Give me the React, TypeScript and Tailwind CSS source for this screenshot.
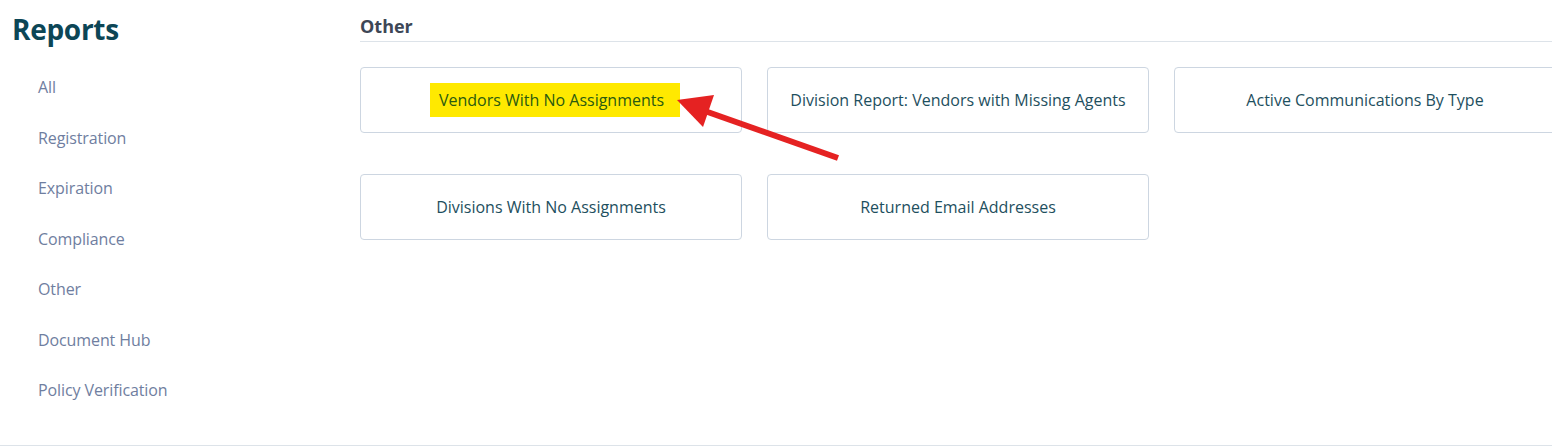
const NAV = ['All', 'Registration', 'Expiration', 'Compliance', 'Other', 'Document Hub', 'Policy Verification'];

const REPORTS = [
  ['Vendors With No Assignments', 'Division Report: Vendors with Missing Agents', 'Active Communications By Type'],
  ['Divisions With No Assignments', 'Returned Email Addresses'],
];

function ReportCard({ label, highlight }: { label: string; highlight?: boolean }) {
  return (
    <button
      type="button"
      className="flex h-[66px] w-[382px] shrink-0 items-center justify-center rounded-[4px] border border-[#cdd6e1] bg-white text-[16px] text-[#1e4f5e]"
    >
      {highlight ? (
        <span className="translate-x-[4px] bg-[#ffe900] pb-[5px] pl-[9px] pr-[16px] pt-[5px] text-[#2a5a10]">{label}</span>
      ) : (
        label
      )}
    </button>
  );
}

export default function App() {
  return (
    <div
      className="relative h-[447px] w-[1552px] overflow-hidden bg-white"
      style={{ fontFamily: '"Open Sans", "Noto Sans", sans-serif' }}
    >
      <div className="flex h-[446px] border-b border-[#dde3e9]">
        <aside className="w-[360px] shrink-0">
          <h1 className="pl-[12px] pt-[10px] text-[28px] font-bold leading-[38px] tracking-[-0.3px] text-[#0c4656]">
            Reports
          </h1>
          <nav className="mt-[27px] flex flex-col">
            {NAV.map((n) => (
              <a key={n} className="h-[50.5px] pl-[38px] text-[16px] leading-[24px] tracking-[-0.1px] text-[#6f7ea0]">
                {n}
              </a>
            ))}
          </nav>
        </aside>

        <main className="min-w-0 flex-1">
          <h2 className="mt-[14px] border-b border-[#dde3e9] pb-[3px] text-[18px] font-bold leading-[24px] text-[#3d4756]">
            Other
          </h2>
          <div className="mt-[25px] flex flex-col gap-[41px]">
            {REPORTS.map((row, i) => (
              <div key={i} className="flex gap-[25px]">
                {row.map((r) => (
                  <ReportCard key={r} label={r} highlight={r === 'Vendors With No Assignments'} />
                ))}
              </div>
            ))}
          </div>
        </main>
      </div>

      {/* annotation arrow */}
      <svg className="pointer-events-none absolute left-0 top-0" width="1552" height="447">
        <line x1="838" y1="158" x2="702" y2="110" stroke="#e52222" strokeWidth="6" />
        <polygon points="677,100 714,95 703,127" fill="#e52222" />
      </svg>
    </div>
  );
}
